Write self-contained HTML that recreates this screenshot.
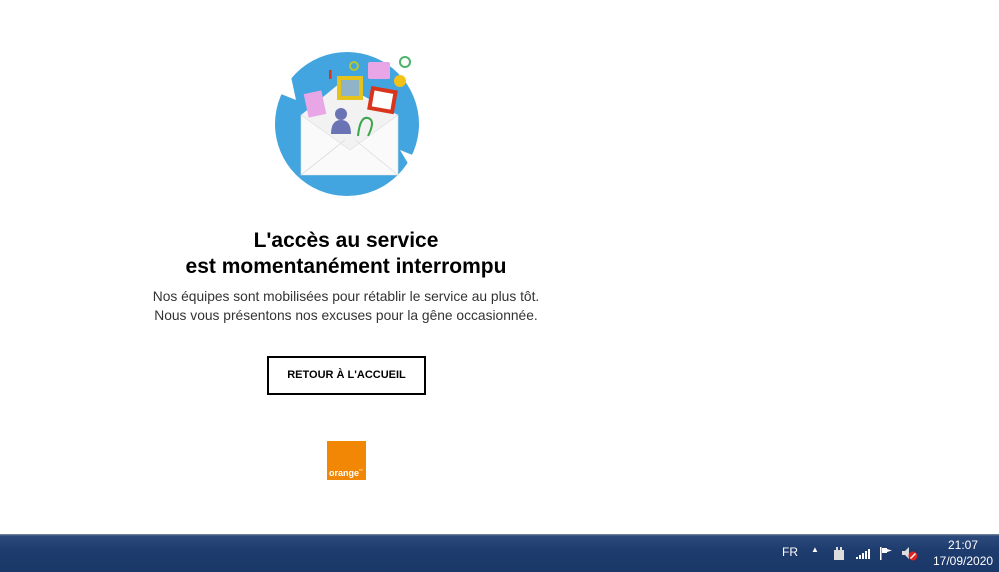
<!DOCTYPE html>
<html><head><meta charset="utf-8"><style>
body{margin:0;width:999px;height:572px;background:#fff;position:relative;overflow:hidden;font-family:"Liberation Sans",Arial,sans-serif}
.t{position:absolute;left:46px;width:600px;text-align:center;color:#000}
h1{position:absolute;left:46px;width:600px;text-align:center;margin:0;top:228px;font-size:21px;font-weight:bold;line-height:26px}
.p{top:287px;font-size:13.8px;line-height:19px;color:#333}
.btn{position:absolute;left:267px;top:356px;width:155px;height:35px;border:2px solid #000;box-sizing:content-box;font-size:11px;font-weight:bold;text-align:center;line-height:35px}
.logo{position:absolute;left:327px;top:441px;width:39px;height:39px;background:#f28705}
.logo span{position:absolute;left:2px;bottom:2px;color:#fff;font-size:9px;font-weight:bold}
.tb{position:absolute;left:0;top:534px;width:999px;height:38px;background:linear-gradient(#7a8aa8 0,#5a6d90 1px,#2c4a7a 2px,#1e3c6e 40%,#1a3768 100%)}
.tb span{position:absolute;color:#fff;font-size:12px}
</style></head><body>
<svg style="position:absolute;left:270px;top:40px" width="160" height="165" viewBox="270 40 160 165">
<circle cx="347" cy="124" r="72" fill="#43a5df"/>
<path d="M276 92 L296 100 L290 72Z" fill="#fff"/>
<path d="M400 150 L420 158 L415 175Z" fill="#fff"/>
<path d="M301 115 L340 83 L398 115 L398 175 L301 175Z" fill="#f2f2f2"/>
<rect x="306" y="92" width="18" height="24" fill="#e9a6e6" transform="rotate(-12 315 104)"/>
<rect x="337" y="76" width="26" height="24" fill="#e6c21d"/>
<rect x="341" y="80" width="18" height="16" fill="#8fb4c8"/>
<rect x="369" y="88" width="27" height="24" fill="#d9341c" transform="rotate(10 382 100)"/>
<rect x="373" y="92" width="19" height="16" fill="#fff" transform="rotate(10 382 100)"/>
<rect x="368" y="62" width="22" height="17" rx="2" fill="#e9a6e6"/>
<circle cx="400" cy="81" r="6" fill="#f2c218"/>
<circle cx="354" cy="66" r="4" fill="none" stroke="#b3c733" stroke-width="2"/>
<rect x="329" y="70" width="2.5" height="9" fill="#d9341c"/>
<circle cx="405" cy="62" r="5" fill="none" stroke="#4db36b" stroke-width="2"/>
<circle cx="341" cy="114" r="6" fill="#6a73b4"/>
<path d="M331 134 Q331 120 341 120 Q351 120 351 134Z" fill="#6a73b4"/>
<path d="M358 136 Q360 116 368 118 Q376 120 368 136" fill="none" stroke="#3aa54a" stroke-width="2"/>
<path d="M301 115 L301 175 L398 175 L398 115 L350 150Z" fill="#fafafa" stroke="#ddd" stroke-width="0.6"/>
<path d="M301 175 L345 140 M398 175 L355 140" stroke="#ddd" stroke-width="0.8"/>
</svg>
<h1>L'accès au service<br>est momentanément interrompu</h1>
<div class="t p">Nos équipes sont mobilisées pour rétablir le service au plus tôt.<br>Nous vous présentons nos excuses pour la gêne occasionnée.</div>
<div class="btn">RETOUR À L'ACCUEIL</div>
<div class="logo"><span>orange<sup style="font-size:4px">™</sup></span></div>
<div class="tb">
<span style="left:782px;top:11px">FR</span>
<span style="left:811px;top:11px;font-size:8px">▲</span>
<svg style="position:absolute;left:832px;top:13px" width="14" height="14"><rect x="2" y="3" width="10" height="10" fill="#ddd"/><rect x="4" y="0" width="2" height="4" fill="#ddd"/><rect x="8" y="0" width="2" height="4" fill="#ddd"/></svg>
<svg style="position:absolute;left:855px;top:14px" width="16" height="12"><rect x="1" y="9" width="2" height="2" fill="#fff"/><rect x="4" y="7" width="2" height="4" fill="#fff"/><rect x="7" y="5" width="2" height="6" fill="#fff"/><rect x="10" y="3" width="2" height="8" fill="#fff"/><rect x="13" y="1" width="2" height="10" fill="#fff"/></svg>
<svg style="position:absolute;left:879px;top:12px" width="14" height="14"><rect x="1" y="1" width="1.5" height="13" fill="#fff"/><rect x="3" y="2" width="5" height="5" fill="#fff"/><path d="M8 3 L13 4.5 L8 6Z" fill="#fff"/></svg>
<svg style="position:absolute;left:901px;top:12px" width="18" height="16"><path d="M1 5 H4 L8 1 V13 L4 9 H1Z" fill="#ddd"/><circle cx="12" cy="10" r="4.5" fill="#d22"/><path d="M9.5 12.5 L14.5 7.5" stroke="#fff" stroke-width="1.5"/></svg>
<span style="left:948px;top:4px">21:07</span>
<span style="left:933px;top:20px">17/09/2020</span>
</div>
</body></html>
